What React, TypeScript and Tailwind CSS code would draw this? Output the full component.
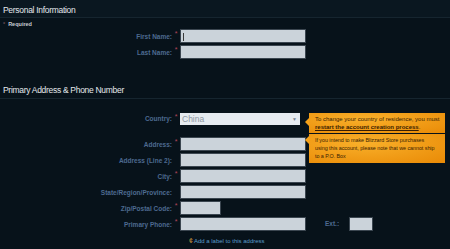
import React from 'react'

const font = { fontFamily: '"Liberation Sans", Arial, sans-serif' }

function Star() {
	return <span className="w-[8px] text-center text-[7px] leading-none text-[#b0485a]">*</span>
}

function Field({
	label,
	required,
	width = 'w-[126px]',
	top = 'mt-[2px]',
	children,
}: {
	label: string
	required?: boolean
	width?: string
	top?: string
	children?: React.ReactNode
}) {
	return (
		<div className={`flex items-center ${top}`}>
			<div className="w-[172px] pt-[1px] text-right text-[6.5px] font-bold text-[#4d6a90]">{label}</div>
			<div className="flex w-[8px] justify-center self-start pt-[1px]">{required && <Star />}</div>
			<div className={`h-[14px] ${width} border border-[#3b4650] bg-[#cbd3da]`} />
			{children}
		</div>
	)
}

export default function App() {
	return (
		<div className="relative h-[249px] w-[450px] overflow-hidden bg-[#07121a]" style={font}>
			<div className="h-[18px] border-b border-[#16252f] bg-[#0a1720] pl-[3px] pt-[4px] text-[8.5px] tracking-[-0.3px] text-[#e4e8ec]">
				Personal Information
			</div>
			<div className="mt-[2px] flex items-center gap-[3px] pl-[3px] text-[5.5px] font-bold text-[#c6ccd2]">
				<span className="text-[#6a4a55]">*</span>
				Required
			</div>

			<Field label="First Name:" required top="mt-[1px]">
				<div className="absolute left-[183px] top-[33px] h-[8px] w-[1px] bg-[#3a3a3a]" />
			</Field>
			<Field label="Last Name:" required />

			<div className="mt-[25px] h-[15px] border-b border-[#16252f] pl-[3px] text-[8.5px] tracking-[-0.3px] text-[#e4e8ec]">
				Primary Address &amp; Phone Number
			</div>

			<div className="mt-[14px] flex items-center">
				<div className="w-[172px] text-right text-[6.5px] font-bold text-[#4d6a90]">Country:</div>
				<div className="flex w-[8px] justify-center self-start">
					<Star />
				</div>
				<div className="flex h-[12px] w-[120px] items-center justify-between bg-[#e6ebf0] pl-[2px] pr-[3px]">
					<span className="text-[8.5px] text-[#8e98a2]">China</span>
					<span className="text-[5px] text-[#7a8590]">▼</span>
				</div>
			</div>

			<Field label="Address:" required top="mt-[12px]" />
			<Field label="Address (Line 2):" />
			<Field label="City:" required />
			<Field label="State/Region/Province:" />
			<Field label="Zip/Postal Code:" required width="w-[41px]" />
			<Field label="Primary Phone:" required>
				<span className="ml-[19px] w-[24px] text-[6.5px] font-bold text-[#4d6a90]">Ext.:</span>
				<div className="h-[14px] w-[24px] border border-[#3b4650] bg-[#cbd3da]" />
			</Field>

			<div className="mt-[5px] flex items-center pl-[189px] text-[6px] text-[#5a9cc8]">
				<span className="mr-[1px] text-[7px] text-[#d9a440]">¢</span>
				Add a label to this address
			</div>

			{/* tooltips */}
			<div className="absolute left-[309px] top-[113px] h-[20px] w-[136px] whitespace-nowrap bg-[radial-gradient(ellipse_at_40%_30%,#f9b02a,#e98a06)] px-[6px] pt-[2px] text-[6px] leading-[8px] text-[#3a1e02]">
				<div className="absolute left-[-4px] top-[5px] h-0 w-0 border-y-[4px] border-r-[4px] border-y-transparent border-r-[#f6a21a]" />
				To change your country of residence, you must
				<br />
				<span className="font-bold underline">restart the account creation process</span>.
			</div>
			<div className="absolute left-[309px] top-[134px] h-[29px] w-[136px] whitespace-nowrap bg-[radial-gradient(ellipse_at_40%_30%,#f9b02a,#e98a06)] py-[2px] pl-[6px] pr-[2px] text-[5.4px] leading-[8px] tracking-[-0.05px] text-[#3a1e02]">
				<div className="absolute left-[-4px] top-[2px] h-0 w-0 border-y-[4px] border-r-[4px] border-y-transparent border-r-[#f6a21a]" />
				If you intend to make Blizzard Store purchases
				<br />
				using this account, please note that we cannot ship
				<br />
				to a P.O. Box
			</div>
		</div>
	)
}
